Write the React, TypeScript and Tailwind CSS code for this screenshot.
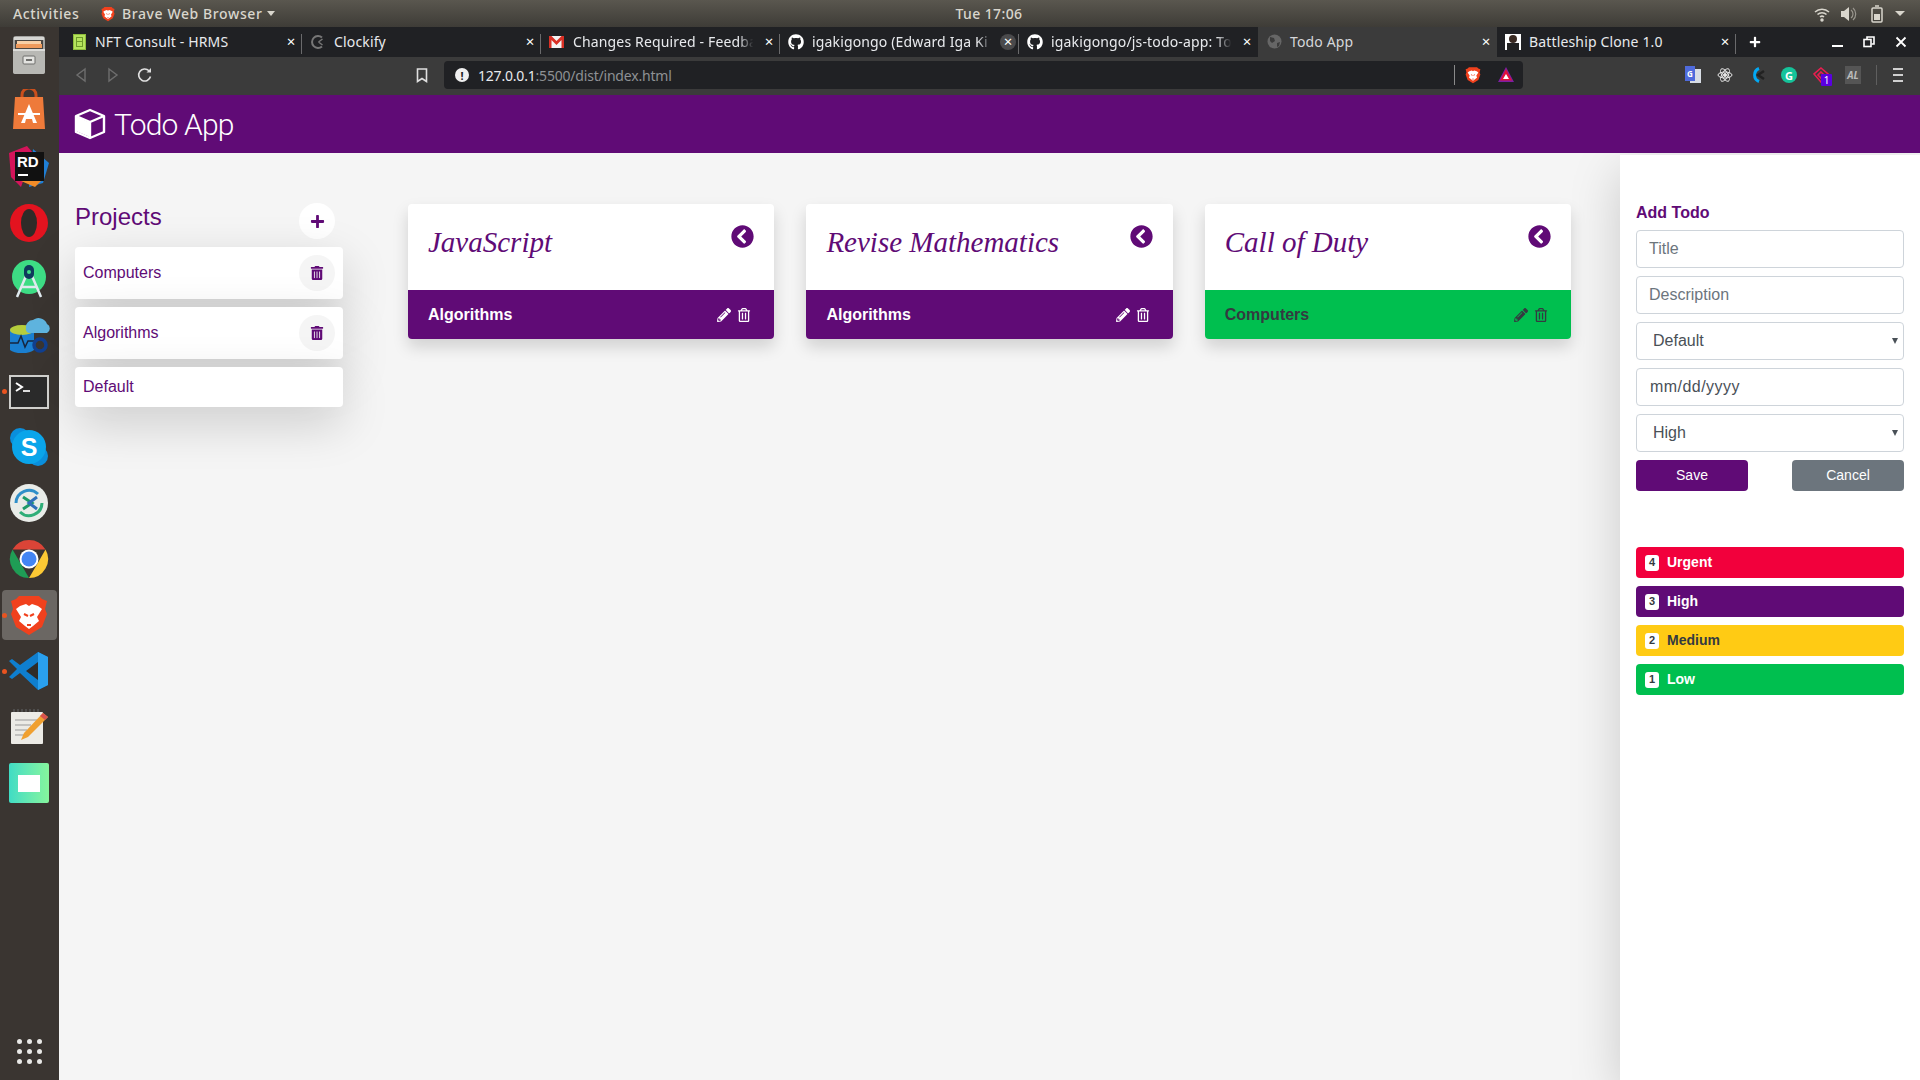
// App.tsx
import React from "react";
import {
  FaChevronCircleLeft,
  FaGithub,
  FaPencilAlt,
  FaPlus,
  FaRegTrashAlt,
  FaTrashAlt,
} from "react-icons/fa";

const UI_FONT = "font-['Noto_Sans',sans-serif]";

/* ---------- dock icons ---------- */

const FilesIcon = () => (
  <svg width="44" height="44" viewBox="0 0 44 44">
    <rect x="6" y="3" width="32" height="38" rx="3" fill="#a3a3a0" />
    <rect x="7" y="4" width="30" height="3" fill="#d6d6d3" />
    <rect x="8" y="7" width="28" height="9" fill="#4a4642" />
    <rect x="10" y="8" width="24" height="3" fill="#f7cfa6" />
    <rect x="9" y="11" width="26" height="4" fill="#ee9a5c" />
    <rect x="6" y="16" width="32" height="25" rx="2" fill="#b8b8b4" />
    <rect x="6" y="16" width="32" height="2" fill="#dcdcd9" />
    <rect x="16" y="23" width="12" height="8" rx="1" fill="#e3e3e0" stroke="#6f6f6c" />
    <rect x="19" y="26" width="6" height="2" fill="#6f6f6c" />
  </svg>
);

const StoreIcon = () => (
  <svg width="44" height="44" viewBox="0 0 44 44">
    <path d="M15 10V6a7 7 0 0 1 14 0v4" fill="none" stroke="#c94f1c" strokeWidth="3" />
    <path d="M8 8h28l2 32H6z" fill="#ee7a3a" />
    <path d="M22 15l8 19h-4l-1-4h-6l-1 4h-4z" fill="#fff" />
    <rect x="11" y="24" width="22" height="2" fill="#fff" />
  </svg>
);

const RiderIcon = () => (
  <svg width="44" height="44" viewBox="0 0 44 44">
    <path d="M2 8l18-7 6 7-12 34L4 32z" fill="#d4145a" />
    <path d="M26 4l16 14-6 20-14 4z" fill="#1f7fd6" />
    <path d="M14 36l14 6 8-8z" fill="#f28c28" />
    <rect x="8" y="7" width="29" height="29" fill="#111" />
    <text x="10" y="22" fill="#fff" fontSize="15" fontWeight="700" fontFamily="Liberation Sans">RD</text>
    <rect x="11" y="29" width="10" height="2" fill="#fff" />
  </svg>
);

const OperaIcon = () => (
  <svg width="44" height="44" viewBox="0 0 44 44">
    <circle cx="22" cy="22" r="19" fill="#e3131f" />
    <ellipse cx="22" cy="22" rx="8" ry="14" fill="#2f2b28" />
  </svg>
);

const AndroidStudioIcon = () => (
  <svg width="44" height="44" viewBox="0 0 44 44">
    <circle cx="22" cy="20" r="17" fill="#3ddc84" />
    <path d="M22 12L10 40M22 12l12 28M14 30h16" stroke="#dfe9ee" strokeWidth="2.5" fill="none" />
    <rect x="17" y="8" width="10" height="14" rx="5" fill="#0e3a5c" />
    <circle cx="22" cy="15" r="2" fill="#3ddc84" />
  </svg>
);

const AzureIcon = () => (
  <svg width="44" height="44" viewBox="0 0 44 44">
    <path d="M3 17a13 6 0 0 1 24 0v20a13 5 0 0 1-24 0z" fill="#1a7fd0" />
    <ellipse cx="15" cy="17" rx="12" ry="5" fill="#b5cd3c" />
    <path d="M3 30h8l3-7 4 11 3-6h6" stroke="#16263f" strokeWidth="1.5" fill="none" />
    <path d="M19 15a7 7 0 0 1 7-8 9 9 0 0 1 14 4 5 5 0 0 1 0 9H22a4 4 0 0 1-3-5z" fill="#5eb3de" />
    <circle cx="33" cy="32" r="6" fill="none" stroke="#103f8f" strokeWidth="3.5" />
  </svg>
);

const TerminalIcon = () => (
  <svg width="44" height="44" viewBox="0 0 44 44">
    <rect x="2" y="6" width="40" height="34" fill="#cfcfcc" />
    <rect x="4" y="8" width="36" height="30" fill="#2a2a2a" />
    <path d="M9 14l6 4-6 4" stroke="#fff" strokeWidth="2" fill="none" />
    <rect x="16" y="21" width="7" height="2" fill="#ddd" />
  </svg>
);

const SkypeIcon = () => (
  <svg width="44" height="44" viewBox="0 0 44 44">
    <circle cx="13" cy="13" r="10" fill="#0a8fdc" />
    <circle cx="31" cy="31" r="10" fill="#0a8fdc" />
    <circle cx="22" cy="22" r="17" fill="#0aa5ea" />
    <text x="22" y="31" textAnchor="middle" fill="#fff" fontSize="25" fontWeight="700" fontFamily="Liberation Sans">S</text>
  </svg>
);

const DeskIcon = () => (
  <svg width="44" height="44" viewBox="0 0 44 44">
    <circle cx="22" cy="22" r="19" fill="#e9ece8" />
    <path d="M9 22a13 13 0 0 1 22-9" stroke="#2f8fc9" strokeWidth="3" fill="none" />
    <path d="M35 22a13 13 0 0 1-22 9" stroke="#2fae78" strokeWidth="3" fill="none" />
    <path d="M16 16l9 6-9 6" stroke="#1d9a68" strokeWidth="3" fill="none" />
    <path d="M30 16l-8 6 8 6" stroke="#2f6fb9" strokeWidth="3" fill="none" />
  </svg>
);

const ChromeIcon = () => (
  <svg width="44" height="44" viewBox="0 0 44 44">
    <path d="M5.5 12.5A19 19 0 0 1 38.5 12.5H22z" fill="#db4437" />
    <path d="M38.5 12.5A19 19 0 0 1 22 41l8.5-14.5z" fill="#fcc934" />
    <path d="M22 41A19 19 0 0 1 5.5 12.5L14 27z" fill="#1f9d55" />
    <circle cx="22" cy="22" r="9.5" fill="#fff" />
    <circle cx="22" cy="22" r="7.5" fill="#4285f4" />
  </svg>
);

const BraveIcon = ({ size = 44 }: { size?: number }) => (
  <svg width={size} height={size} viewBox="0 0 44 44">
    <path d="M12 3h20l3 3 5 2-2 8 2 5-5 13-13 8-13-8L4 21l2-5-2-8 5-2z" fill="#f1411d" />
    <path d="M13 13l6-2 3 2 3-2 6 2 4 3-5 8 2 4-6 5-4 3-4-3-6-5 2-4-5-8z" fill="#fff" />
    <path d="M17 21l4 2M27 21l-4 2M20 32h4" stroke="#f1411d" strokeWidth="2" />
  </svg>
);

const VsCodeIcon = () => (
  <svg width="44" height="44" viewBox="0 0 44 44">
    <path d="M31 3l10 5v28l-10 5-18-17-8 6-3-2 8-8-8-8 3-2 8 6z" fill="#0f7fcf" />
    <path d="M31 3l10 5v28l-10 5z" fill="#2aa0ee" />
    <path d="M31 13L19 22l12 9z" fill="#2f2b28" />
  </svg>
);

const NotepadIcon = () => (
  <svg width="44" height="44" viewBox="0 0 44 44">
    <rect x="4" y="7" width="32" height="32" rx="1" fill="#ecebe6" />
    <path d="M7 7v-3M11 7v-3M15 7v-3M19 7v-3M23 7v-3M27 7v-3M31 7v-3" stroke="#555" strokeWidth="1.5" />
    <path d="M8 15h22M8 20h16M8 25h12M8 30h10" stroke="#999" strokeWidth="1" />
    <path d="M36 8l5 4-20 20-7 3 3-7z" fill="#f0a030" />
    <path d="M36 8l5 4-3 3-5-4z" fill="#d9534f" />
  </svg>
);

const GreenIcon = () => (
  <div className="flex w-10 h-10 items-center justify-center rounded-[2px] bg-gradient-to-r from-[#3fdcc4] to-[#85f59c]">
    <div className="w-[22px] h-[17px] bg-white" />
  </div>
);

const dockItems = [
  { icon: <FilesIcon /> },
  { icon: <StoreIcon /> },
  { icon: <RiderIcon /> },
  { icon: <OperaIcon /> },
  { icon: <AndroidStudioIcon /> },
  { icon: <AzureIcon /> },
  { icon: <TerminalIcon />, running: true },
  { icon: <SkypeIcon /> },
  { icon: <DeskIcon /> },
  { icon: <ChromeIcon /> },
  { icon: <BraveIcon />, running: true, active: true },
  { icon: <VsCodeIcon />, running: true },
  { icon: <NotepadIcon /> },
  { icon: <GreenIcon /> },
];

const Dock = () => (
  <aside className="w-[59px] shrink-0 flex flex-col items-center bg-[#3a3531]">
    {dockItems.map((item, i) => (
      <div key={i} className="relative w-[59px] h-[56px] flex items-center justify-center pr-[1px]">
        {item.active && <div className="absolute inset-x-[2px] inset-y-[3px] rounded-[4px] bg-[#6b6763]" />}
        {item.running && <div className="absolute left-[2px] top-[26px] w-[5px] h-[5px] rounded-full bg-[#e95420]" />}
        <div className="relative">{item.icon}</div>
      </div>
    ))}
    <div className="mt-auto mb-[16px] grid grid-cols-3 gap-x-[5px] gap-y-[5px] pr-[1px]">
      {Array.from({ length: 9 }).map((_, i) => (
        <div key={i} className="w-[5px] h-[5px] rounded-full bg-[#e8e8e6]" />
      ))}
    </div>
  </aside>
);

/* ---------- browser chrome ---------- */

const TopBar = () => (
  <div className={`${UI_FONT} h-[27px] shrink-0 flex items-center bg-gradient-to-b from-[#5a574f] to-[#3e3c37] text-[14px] font-medium tracking-[0.6px] text-[#d9d6cd]`}>
    <span className="ml-[13px] w-[87px]">Activities</span>
    <BraveIcon size={16} />
    <span className="ml-[6px]">Brave Web Browser</span>
    <span className="ml-[5px] border-x-[4px] border-t-[5px] border-x-transparent border-t-[#d9d6cd]" />
    <span className="ml-[680px] whitespace-nowrap tracking-[0.4px]">Tue 17:06</span>
    <div className="ml-auto mr-[15px] flex items-center gap-[10px]">
      <svg width="16" height="16" viewBox="0 0 16 16" fill="none" stroke="#d9d6cd" strokeWidth="1.5">
        <path d="M1 6a10 10 0 0 1 14 0M3.5 8.500a6.500 6.500 0 0 1 9 0M6 11a3 3 0 0 1 4 0" />
        <circle cx="8" cy="14" r="1" fill="#d9d6cd" />
      </svg>
      <svg width="18" height="16" viewBox="0 0 18 16" fill="#d9d6cd">
        <path d="M1 5h3l5-4v14l-5-4H1z" />
        <path d="M11 4a5 5 0 0 1 0 8M13 2a8 8 0 0 1 0 12" stroke="#9a978f" strokeWidth="1.2" fill="none" />
      </svg>
      <svg className="ml-[3px]" width="12" height="18" viewBox="0 0 12 18" fill="none" stroke="#d9d6cd" strokeWidth="1.5">
        <rect x="1" y="3" width="10" height="14" rx="1" />
        <path d="M4 1h4" />
        <rect x="3" y="9" width="6" height="6" fill="#d9d6cd" stroke="none" />
      </svg>
      <span className="ml-[2px] border-x-[5px] border-t-[5px] border-x-transparent border-t-[#d9d6cd]" />
    </div>
  </div>
);

const NftFavicon = () => (
  <div className="w-[13px] h-[16px] bg-[#b5e35d] border border-[#8fbd3c] flex flex-col items-center justify-center">
    <div className="w-[7px] h-[5px] border border-[#6e9a2a]" />
    <div className="w-[7px] h-[5px] border border-t-0 border-[#6e9a2a]" />
  </div>
);

const ClockifyFavicon = () => (
  <svg width="16" height="16" viewBox="0 0 16 16" fill="none" stroke="#777" strokeWidth="2">
    <path d="M12 3.500a6 6 0 1 0 0 9" />
    <path d="M8.500 8l4-3M8.500 8l4 3" strokeWidth="1.5" />
  </svg>
);

const GmailFavicon = () => (
  <svg width="15" height="14" viewBox="0 0 15 14">
    <rect x="0" y="1" width="15" height="12" fill="#f4f4f4" />
    <path d="M0 1h2.500L7.500 6l5-5H15v12h-2.500V5l-5 5-5-5v8H0z" fill="#d93025" />
  </svg>
);

const GlobeFavicon = () => (
  <svg width="15" height="15" viewBox="0 0 15 15">
    <circle cx="7.500" cy="7.500" r="7" fill="#666" />
    <path d="M3 3l4 1 1 3-3 2-2-2zM10 9l3-1-1 4-2 1z" fill="#3b3b3b" />
  </svg>
);

const PersonFavicon = () => (
  <div className="relative w-[16px] h-[16px] bg-white overflow-hidden">
    <div className="absolute left-[4px] top-[1px] w-[8px] h-[8px] rounded-full bg-[#3a2a22]" />
    <div className="absolute left-[2px] top-[9px] w-[12px] h-[8px] bg-[#222]" />
  </div>
);

const tabs = [
  { title: "NFT Consult - HRMS", icon: <NftFavicon /> },
  { title: "Clockify", icon: <ClockifyFavicon /> },
  { title: "Changes Required - Feedba", icon: <GmailFavicon />, fade: true },
  { title: "igakigongo (Edward Iga Ki", icon: <FaGithub className="text-white text-[16px]" />, hoverClose: true, fade: true },
  { title: "igakigongo/js-todo-app: To", icon: <FaGithub className="text-white text-[16px]" />, fade: true },
  { title: "Todo App", icon: <GlobeFavicon />, active: true },
  { title: "Battleship Clone 1.0", icon: <PersonFavicon /> },
];

const TabStrip = () => (
  <div className={`${UI_FONT} h-[30px] shrink-0 flex items-stretch bg-[#202124] pl-[4px] text-[14px] text-[#e8eaed]`}>
    {tabs.map((tab, i) => (
      <div
        key={i}
        className={`relative w-[239px] flex items-center pl-[8px] pr-[3px] pb-[1px] ${tab.active ? "bg-[#3b3b3b] text-[#d5d7da]" : ""}`}
      >
        <div className="w-[16px] flex justify-center">{tab.icon}</div>
        <span
          className={`ml-[8px] flex-1 whitespace-nowrap tracking-[0.15px] ${tab.fade ? "[mask-image:linear-gradient(90deg,#000_90%,transparent_98%)]" : ""}`}
        >
          {tab.title}
        </span>
        <span className={`ml-[4px] flex w-[16px] h-[16px] items-center justify-center rounded-full text-[15px] leading-none text-white ${tab.hoverClose ? "bg-[#4a4a4c]" : ""}`}>
          ×
        </span>
        {!tab.active && i !== 4 && <div className="absolute right-0 top-[7px] h-[20px] w-px bg-[#6a6a6c]" />}
      </div>
    ))}
    <span className="ml-[13px] w-[16px] self-center">
      <FaPlus className="text-white text-[12px]" />
    </span>
    <div className="ml-auto mr-[13px] flex items-center gap-[20px]">
      <div className="mt-[8px] w-[11px] h-[2px] bg-white" />
      <svg width="12" height="12" viewBox="0 0 12 12" fill="none" stroke="#fff" strokeWidth="1.6">
        <rect x="1" y="3.500" width="7" height="7" fill="#202124" />
        <path d="M4 3V1h7v7H8.500" />
      </svg>
      <svg width="12" height="12" viewBox="0 0 12 12" stroke="#fff" strokeWidth="1.8">
        <path d="M1.500 1.500l9 9M10.500 1.500l-9 9" />
      </svg>
    </div>
  </div>
);

const ExtIcon = ({ children }: { children: React.ReactNode }) => (
  <div className="relative w-[32px] h-[20px] flex items-center justify-center">{children}</div>
);

const Toolbar = () => (
  <div className={`${UI_FONT} h-[38px] shrink-0 flex items-center bg-[#3b3b3b] pb-[2px]`}>
    <svg className="ml-[16px]" width="12" height="16" viewBox="0 0 12 16" fill="none" stroke="#6e6e6e" strokeWidth="1.4">
      <path d="M10 2L2 8l8 6z" />
    </svg>
    <svg className="ml-[20px]" width="12" height="16" viewBox="0 0 12 16" fill="none" stroke="#6e6e6e" strokeWidth="1.4">
      <path d="M2 2l8 6-8 6z" />
    </svg>
    <svg className="ml-[18px]" width="16" height="16" viewBox="0 0 16 16" fill="none" stroke="#e0e0e0" strokeWidth="1.6">
      <path d="M13.500 9.500A6 6 0 1 1 12 3.800" />
      <path d="M9.500 5.500h4.500V1z" fill="#e0e0e0" stroke="none" />
    </svg>
    <svg className="ml-[263px]" width="12" height="15" viewBox="0 0 12 15" fill="none" stroke="#e0e0e0" strokeWidth="1.6">
      <path d="M1.500 1h9v12.500L6 10.500l-4.500 3z" />
    </svg>
    {/* url bar */}
    <div className="ml-[16px] w-[1079px] h-[28px] flex items-center rounded-[4px] bg-[#202124] text-[14px] tracking-[-0.2px]">
      <span className="ml-[11px] flex w-[14px] h-[14px] items-center justify-center rounded-full bg-[#f0f0f0] text-[11px] font-bold leading-none text-[#202124]">
        !
      </span>
      <span className="ml-[9px] text-[#e8eaed]">127.0.0.1</span>
      <span className="text-[#8e9194]">:5500/dist/index.html</span>
      <div className="ml-auto h-[20px] w-px bg-[#8a8a8a]" />
      <div className="ml-[9px]"><BraveIcon size={18} /></div>
      <svg className="ml-[15px] mr-[8px]" width="18" height="18" viewBox="0 0 18 18">
        <path d="M9 1l8 15H1z" fill="#7b1fa2" />
        <path d="M9 3l6 11.500H3z" fill="#e0103a" />
        <path d="M9 8l3 5H6z" fill="#fff" />
      </svg>
    </div>
    <div className="ml-auto mr-[10px] flex items-center">
      <ExtIcon>
        <div className="relative w-[16px] h-[18px]">
          <div className="absolute left-[5px] top-[3px] w-[11px] h-[14px] bg-[#d8dde5]" />
          <div className="absolute left-0 top-0 flex w-[10px] h-[15px] items-center justify-center bg-[#4f6bdc] text-[8px] font-bold text-white">G</div>
        </div>
      </ExtIcon>
      <ExtIcon>
        <svg width="16" height="16" viewBox="0 0 16 16" fill="none" stroke="#e6e6e6" strokeWidth="1">
          <ellipse cx="8" cy="8" rx="7" ry="3" />
          <ellipse cx="8" cy="8" rx="7" ry="3" transform="rotate(60 8 8)" />
          <ellipse cx="8" cy="8" rx="7" ry="3" transform="rotate(120 8 8)" />
          <circle cx="8" cy="8" r="1.500" fill="#e6e6e6" />
        </svg>
      </ExtIcon>
      <ExtIcon>
        <svg width="16" height="18" viewBox="0 0 16 18" fill="none" strokeWidth="3">
          <path d="M10 2.500a7 7 0 0 0 0 13" stroke="#03a9f4" />
          <path d="M15 5l-6 4 6 4" stroke="#222" strokeWidth="2.500" />
        </svg>
      </ExtIcon>
      <ExtIcon>
        <div className="flex w-[16px] h-[16px] items-center justify-center rounded-full bg-[#15c39a] text-[11px] font-bold leading-none text-white">G</div>
      </ExtIcon>
      <ExtIcon>
        <svg width="16" height="16" viewBox="0 0 16 16" fill="none" stroke="#e91e50" strokeWidth="1.600">
          <path d="M8 1l7 6-7 8-7-8z" />
          <path d="M8 5l3 3-3 3-3-3z" />
        </svg>
        <span className="absolute left-[16px] top-[9px] flex w-[11px] h-[12px] items-center justify-center rounded-[1px] bg-[#5a00e0] text-[10px] leading-none text-white">1</span>
      </ExtIcon>
      <ExtIcon>
        <div className="flex w-[16px] h-[18px] items-center justify-center bg-[#555] text-[10px] font-bold italic text-[#bbb]">AL</div>
      </ExtIcon>
      <div className="mx-[7px] h-[20px] w-px bg-[#5f5f5f]" />
      <div className="ml-[9px] mr-[7px] flex flex-col gap-[4px]">
        <div className="w-[10px] h-[2px] bg-[#d0d0d0]" />
        <div className="w-[10px] h-[2px] bg-[#d0d0d0]" />
        <div className="w-[10px] h-[2px] bg-[#d0d0d0]" />
      </div>
    </div>
  </div>
);

/* ---------- todo app ---------- */

// outlined top and right faces, solid left face
const CubeLogo = () => (
  <svg width="32" height="32" viewBox="0 0 32 32" fill="none" stroke="#fff" strokeWidth="2.400" strokeLinejoin="round">
    <path d="M16 2L30 8v16l-14 6-14-6V8z" />
    <path d="M2 8l14 6 14-6M16 14v16" />
    <path d="M3 9l13 5.500V29L3 23.500z" fill="#fff" stroke="none" />
  </svg>
);

const projects = [
  { name: "Computers", removable: true },
  { name: "Algorithms", removable: true },
  { name: "Default", removable: false },
];

const ProjectsPanel = () => (
  <section className="w-[268px] shrink-0 ml-[16px] pt-[50px]">
    <div className="flex items-start justify-between pr-[8px]">
      <h4 className="text-[24px] leading-[27px] text-[#600b76]">Projects</h4>
      <button className="flex w-[36px] h-[36px] items-center justify-center rounded-full bg-white text-[#600b76]">
        <FaPlus className="text-[15px]" />
      </button>
    </div>
    <ul className="mt-[8px] flex flex-col gap-[8px]">
      {projects.map((project) => (
        <li
          key={project.name}
          className={`flex items-center justify-between rounded-[4px] bg-white pl-[8px] pr-[8px] text-[16px] text-[#600b76] shadow-[0_16px_48px_rgba(0,0,0,0.175)] ${project.removable ? "h-[52px]" : "h-[40px]"}`}
        >
          <span>{project.name}</span>
          {project.removable && (
            <span className="flex w-[36px] h-[36px] items-center justify-center rounded-full bg-[#f5f5f5]">
              <FaTrashAlt className="text-[14px]" />
            </span>
          )}
        </li>
      ))}
    </ul>
  </section>
);

const todos = [
  { title: "JavaScript", project: "Algorithms", footer: "bg-[#600b76] text-white" },
  { title: "Revise Mathematics", project: "Algorithms", footer: "bg-[#600b76] text-white" },
  { title: "Call of Duty", project: "Computers", footer: "bg-[#00bf4f] text-[#343a40]" },
];

const TodoCard = ({ todo }: { todo: (typeof todos)[number] }) => (
  <article className="w-[366.4px] h-[135px] flex flex-col overflow-hidden rounded-[4px] bg-white shadow-[0_8px_16px_rgba(0,0,0,0.15)]">
    <div className="h-[86px] flex items-start justify-between pl-[20px] pr-[20px] pt-[18px]">
      <h5 className="font-['Liberation_Serif',serif] text-[29px] leading-[40px] italic text-[#600b76]">{todo.title}</h5>
      <FaChevronCircleLeft className="mt-[3px] text-[23px] text-[#600b76]" />
    </div>
    <div className={`flex-1 flex items-center justify-between pl-[20px] pr-[23px] text-[16px] font-bold ${todo.footer}`}>
      <span>{todo.project}</span>
      <span className="flex items-center gap-[6px] text-[14px]">
        <FaPencilAlt />
        <FaRegTrashAlt />
      </span>
    </div>
  </article>
);

const inputClass =
  "w-full h-[38px] rounded-[4px] border border-[#ced4da] bg-white px-[12px] text-[16px] text-[#495057] placeholder:text-[#6c757d]";

const priorities = [
  { count: 4, label: "Urgent", style: "bg-[#f2003c] text-white" },
  { count: 3, label: "High", style: "bg-[#600b76] text-white" },
  { count: 2, label: "Medium", style: "bg-[#ffcb14] text-[#343a40]" },
  { count: 1, label: "Low", style: "bg-[#00bf4f] text-white" },
];

const SelectField = ({ value, options }: { value: string; options: string[] }) => (
  <div className="relative">
    <select className={`${inputClass} appearance-none pl-[16px]`} defaultValue={value}>
      {options.map((option) => (
        <option key={option}>{option}</option>
      ))}
    </select>
    <span className="absolute right-[6px] top-[16px] border-x-[3.5px] border-t-[6px] border-x-transparent border-t-[#495057]" />
  </div>
);

const AddTodoPanel = () => (
  <aside className="ml-auto mt-[2px] w-[300px] shrink-0 bg-white px-[16px] pt-[48px] shadow-[0_16px_48px_rgba(0,0,0,0.175)]">
    <h6 className="text-[16px] leading-[19px] font-bold text-[#600b76]">Add Todo</h6>
    <form className="mt-[8px] flex flex-col gap-[8px]">
      <input className={inputClass} placeholder="Title" />
      <input className={inputClass} placeholder="Description" />
      <SelectField value="Default" options={["Default", "Computers", "Algorithms"]} />
      <input className={`${inputClass} pl-[13px] tracking-[0.45px]`} defaultValue="mm/dd/yyyy" />
      <SelectField value="High" options={["Urgent", "High", "Medium", "Low"]} />
      <div className="flex justify-between">
        <button type="button" className="w-[112px] h-[31px] rounded-[4px] bg-[#600b76] text-[14px] text-white">Save</button>
        <button type="button" className="w-[112px] h-[31px] rounded-[4px] bg-[#6c757d] text-[14px] text-white">Cancel</button>
      </div>
    </form>
    <div className="mt-[56px] flex flex-col gap-[8px]">
      {priorities.map((p) => (
        <div key={p.label} className={`flex h-[31px] items-center rounded-[4px] pl-[9px] text-[14px] font-bold ${p.style}`}>
          <span className="flex w-[14px] h-[16px] items-center justify-center rounded-[3px] bg-white text-[11px] text-[#343a40]">{p.count}</span>
          <span className="ml-[8px]">{p.label}</span>
        </div>
      ))}
    </div>
  </aside>
);

export default function App() {
  return (
    <div className="w-[1920px] h-[1080px] flex flex-col overflow-hidden bg-[#f5f5f5] font-['Liberation_Sans',Arial,sans-serif]">
      <TopBar />
      <div className="flex-1 flex min-h-0">
        <Dock />
        <div className="flex-1 min-w-0 flex flex-col">
          <TabStrip />
          <Toolbar />
          <header className="relative z-10 h-[58px] shrink-0 flex items-center bg-[#600b76] pl-[15px] text-white">
            <CubeLogo />
            <h1 className="ml-[8px] mt-[1px] font-['Roboto',sans-serif] text-[30px] font-light tracking-[-0.8px]">Todo App</h1>
          </header>
          <main className="flex-1 min-h-0 flex">
            <ProjectsPanel />
            <div className="ml-[65px] flex items-start gap-[32px] pt-[51px]">
              {todos.map((todo) => (
                <TodoCard key={todo.title} todo={todo} />
              ))}
            </div>
            <AddTodoPanel />
          </main>
        </div>
      </div>
    </div>
  );
}
